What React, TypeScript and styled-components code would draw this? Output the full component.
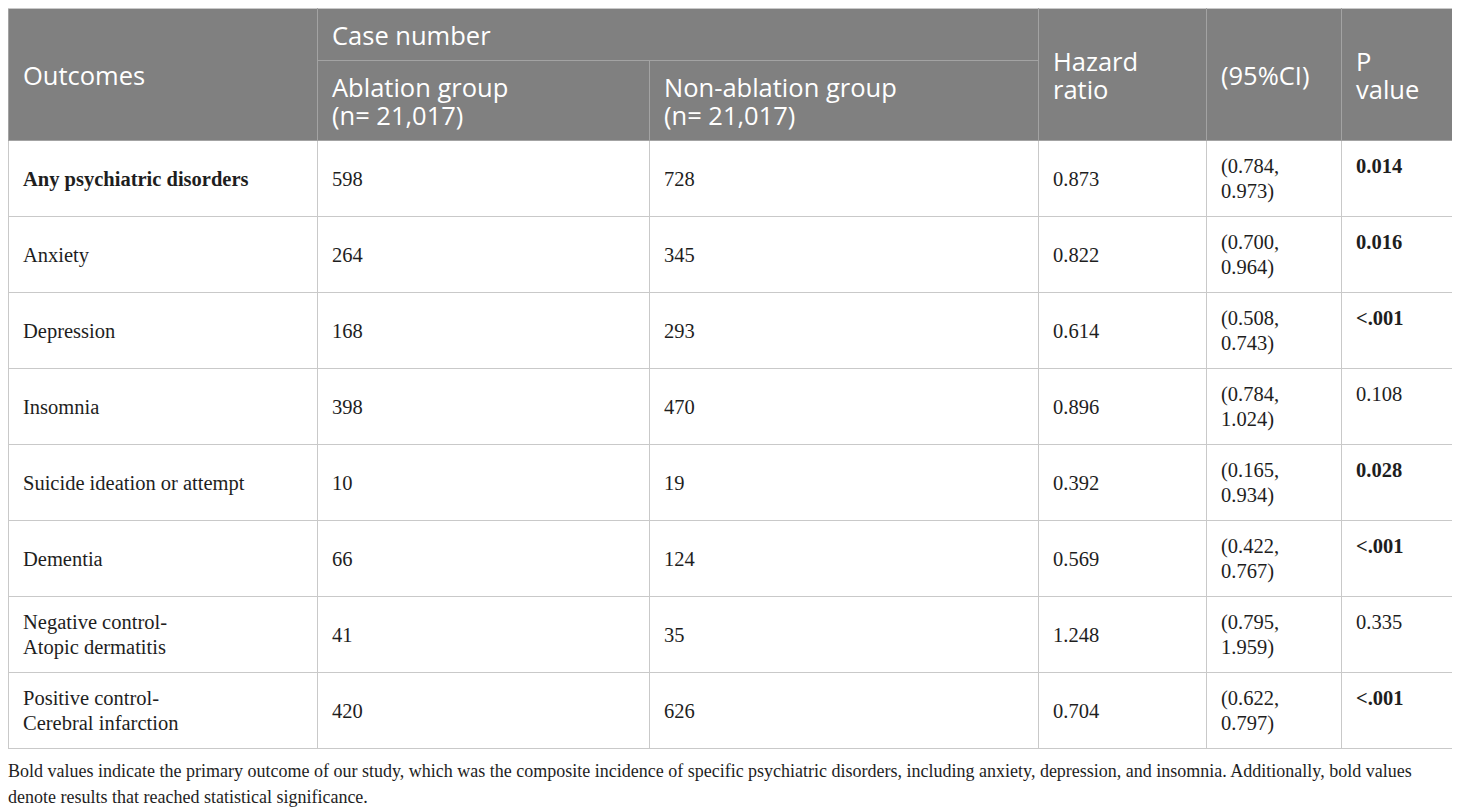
import styled, { createGlobalStyle } from "styled-components";

const GlobalStyle = createGlobalStyle`
  body {
    margin: 8px;
    background: #ffffff;
    font-family: "Liberation Serif", "Times New Roman", serif;
    color: #1e1e1e;
  }
`;

const Wrapper = styled.div`
  width: 1444px;
`;

const Table = styled.table`
  width: 100%;
  table-layout: fixed;
  border-collapse: collapse;
  border: 1px solid #c9c9c9;
`;

const HeadCell = styled.th`
  background: #808080;
  color: #ffffff;
  font-family: "Open Sans", "Liberation Sans", sans-serif;
  font-weight: 400;
  font-size: 25.5px;
  line-height: 28px;
  text-align: left;
  vertical-align: middle;
  padding: 11.5px 14px;
  border: 1px solid #a3a3a3;
  border-top-color: #c9c9c9;
`;

const Cell = styled.td<{ $bold?: boolean; $top?: boolean }>`
  font-size: 20.5px;
  line-height: 25px;
  font-weight: ${(p) => (p.$bold ? 700 : 400)};
  vertical-align: ${(p) => (p.$top ? "top" : "middle")};
  padding: 13px 14px 12px;
  border: 1px solid #c9c9c9;
`;

const Footnote = styled.p`
  margin: 9px 0 0;
  font-size: 18px;
  line-height: 26px;
`;

interface Row {
  outcome: string[];
  bold?: boolean;
  ablation: string;
  nonAblation: string;
  hr: string;
  ci: [string, string];
  p: string;
  pBold: boolean;
}

const rows: Row[] = [
  { outcome: ["Any psychiatric disorders"], bold: true, ablation: "598", nonAblation: "728", hr: "0.873", ci: ["(0.784,", "0.973)"], p: "0.014", pBold: true },
  { outcome: ["Anxiety"], ablation: "264", nonAblation: "345", hr: "0.822", ci: ["(0.700,", "0.964)"], p: "0.016", pBold: true },
  { outcome: ["Depression"], ablation: "168", nonAblation: "293", hr: "0.614", ci: ["(0.508,", "0.743)"], p: "<.001", pBold: true },
  { outcome: ["Insomnia"], ablation: "398", nonAblation: "470", hr: "0.896", ci: ["(0.784,", "1.024)"], p: "0.108", pBold: false },
  { outcome: ["Suicide ideation or attempt"], ablation: "10", nonAblation: "19", hr: "0.392", ci: ["(0.165,", "0.934)"], p: "0.028", pBold: true },
  { outcome: ["Dementia"], ablation: "66", nonAblation: "124", hr: "0.569", ci: ["(0.422,", "0.767)"], p: "<.001", pBold: true },
  { outcome: ["Negative control-", "Atopic dermatitis"], ablation: "41", nonAblation: "35", hr: "1.248", ci: ["(0.795,", "1.959)"], p: "0.335", pBold: false },
  { outcome: ["Positive control-", "Cerebral infarction"], ablation: "420", nonAblation: "626", hr: "0.704", ci: ["(0.622,", "0.797)"], p: "<.001", pBold: true },
];

function Lines({ lines }: { lines: string[] }) {
  return (
    <>
      {lines.map((l, i) => (
        <span key={i}>
          {i > 0 && <br />}
          {l}
        </span>
      ))}
    </>
  );
}

export default function App() {
  return (
    <Wrapper>
      <GlobalStyle />
      <Table>
        <colgroup>
          <col style={{ width: 309 }} />
          <col style={{ width: 332 }} />
          <col style={{ width: 389 }} />
          <col style={{ width: 168 }} />
          <col style={{ width: 135 }} />
          <col style={{ width: 111 }} />
        </colgroup>
        <thead>
          <tr>
            <HeadCell rowSpan={2}>Outcomes</HeadCell>
            <HeadCell colSpan={2}>Case number</HeadCell>
            <HeadCell rowSpan={2}>
              Hazard
              <br />
              ratio
            </HeadCell>
            <HeadCell rowSpan={2}>(95%CI)</HeadCell>
            <HeadCell rowSpan={2}>
              P
              <br />
              value
            </HeadCell>
          </tr>
          <tr>
            <HeadCell>
              Ablation group
              <br />
              (n= 21,017)
            </HeadCell>
            <HeadCell>
              Non-ablation group
              <br />
              (n= 21,017)
            </HeadCell>
          </tr>
        </thead>
        <tbody>
          {rows.map((r) => (
            <tr key={r.outcome.join(" ")}>
              <Cell $bold={r.bold}>
                <Lines lines={r.outcome} />
              </Cell>
              <Cell>{r.ablation}</Cell>
              <Cell>{r.nonAblation}</Cell>
              <Cell>{r.hr}</Cell>
              <Cell>
                <Lines lines={r.ci} />
              </Cell>
              <Cell $top $bold={r.pBold}>
                {r.p}
              </Cell>
            </tr>
          ))}
        </tbody>
      </Table>
      <Footnote>
        Bold values indicate the primary outcome of our study, which was the composite incidence of specific
        psychiatric disorders, including anxiety, depression, and insomnia. Additionally, bold values denote results
        that reached statistical significance.
      </Footnote>
    </Wrapper>
  );
}
